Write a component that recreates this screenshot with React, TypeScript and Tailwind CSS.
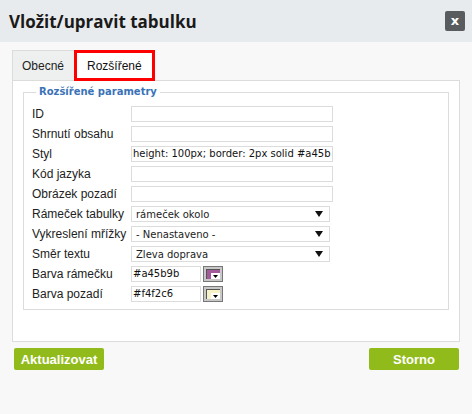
import type { ReactNode } from 'react';

function Caret() {
  return (
    <svg width="8" height="6" viewBox="0 0 8 6" className="shrink-0">
      <path d="M0 0 H8 L4 6 Z" fill="#111" />
    </svg>
  );
}

function TextField({ value = '' }: { value?: string }) {
  return (
    <div className="h-[16px] w-[202px] border border-[#dcdcdc] bg-white px-[1px] overflow-hidden whitespace-nowrap text-[10px] leading-[14px] text-[#111] font-['DejaVu_Sans',sans-serif]">
      {value}
    </div>
  );
}

function SelectField({ value }: { value: string }) {
  return (
    <div className="h-[16px] w-[199px] border border-[#dcdcdc] bg-white flex items-center justify-between pl-[4px] pr-[6px] text-[10px] text-[#222] font-['DejaVu_Sans',sans-serif]">
      <span>{value}</span>
      <Caret />
    </div>
  );
}

function ColorField({ value, color }: { value: string; color: string }) {
  return (
    <div className="flex items-center gap-[2px]">
      <div className="h-[16px] w-[70px] border border-[#dcdcdc] bg-white px-[1px] text-[10px] leading-[14px] text-[#111] font-['DejaVu_Sans',sans-serif]">
        {value}
      </div>
      <div className="h-[16px] w-[20px] border border-[#777] bg-[#c8c8c8] p-[2px] flex">
        <div
          className="flex-1 border-t border-l border-[#555] flex items-end justify-end"
          style={{ backgroundColor: color }}
        >
          <div className="w-[9px] h-[6px] bg-white flex items-center justify-center">
            <svg width="5" height="3" viewBox="0 0 5 3">
              <path d="M0 0 H5 L2.5 3 Z" fill="#000" />
            </svg>
          </div>
        </div>
      </div>
    </div>
  );
}

function Row({ label, children }: { label: string; children: ReactNode }) {
  return (
    <div className="flex items-center h-[20px]">
      <div className="w-[99px] text-[12px] text-[#222] whitespace-nowrap">{label}</div>
      {children}
    </div>
  );
}

export default function App() {
  return (
    <div className="w-[472px] h-[414px] bg-[#f8f8f8] font-['Liberation_Sans',Arial,sans-serif] overflow-hidden">
      {/* Header */}
      <div className="h-[42px] bg-[#e8ebee] flex items-center justify-between pl-[9px] pr-[7px]">
        <h1 className="text-[17px] font-bold text-[#1a1a1a] font-['Open_Sans',sans-serif] leading-none pt-[1px]">
          Vložit/upravit tabulku
        </h1>
        <button className="w-[20px] h-[20px] bg-[#595c5f] rounded-[2px] flex items-center justify-center text-white text-[13px] font-bold leading-none font-['DejaVu_Sans',sans-serif] pb-[2px]">
          x
        </button>
      </div>

      <div className="px-[12px] pt-[8px]">
        {/* Tabs */}
        <div className="flex items-end h-[30px]">
          <div className="h-[30px] w-[62px] bg-[#eef0f0] border-t border-l border-[#dcdcdc] flex items-center pl-[9px] text-[12px] text-[#222]">
            Obecné
          </div>
          <div className="h-[31px] w-[81px] bg-white border-[3px] border-[#ff0000] flex items-center pl-[10px] text-[12px] text-[#111] -mb-[1px] relative z-10">
            Rozšířené
          </div>
        </div>

        {/* Panel */}
        <div className="h-[262px] border border-[#dcdcdc] bg-white pt-[4px] px-[10px]">
          <fieldset className="border border-[#dcdcdc] pl-[8px] pr-[8px] pt-[5px] pb-[5px] m-0">
            <legend className="ml-[4px] px-[3px] text-[10px] leading-[14px] font-bold text-[#3a72b8] font-['DejaVu_Sans',sans-serif]">
              Rozšířené parametry
            </legend>
            <Row label="ID">
              <TextField />
            </Row>
            <Row label="Shrnutí obsahu">
              <TextField />
            </Row>
            <Row label="Styl">
              <TextField value="height: 100px; border: 2px solid #a45b" />
            </Row>
            <Row label="Kód jazyka">
              <TextField />
            </Row>
            <Row label="Obrázek pozadí">
              <TextField />
            </Row>
            <Row label="Rámeček tabulky">
              <SelectField value="rámeček okolo" />
            </Row>
            <Row label="Vykreslení mřížky">
              <SelectField value="- Nenastaveno -" />
            </Row>
            <Row label="Směr textu">
              <SelectField value="Zleva doprava" />
            </Row>
            <Row label="Barva rámečku">
              <ColorField value="#a45b9b" color="#a45b9b" />
            </Row>
            <Row label="Barva pozadí">
              <ColorField value="#f4f2c6" color="#f4f2c6" />
            </Row>
          </fieldset>
        </div>

        {/* Buttons */}
        <div className="flex justify-between pt-[6px] px-[2px] pr-[1px]">
          <button className="h-[22px] w-[90px] bg-[#91bb1a] rounded-[2px] text-white text-[13px] font-bold leading-none">
            Aktualizovat
          </button>
          <button className="h-[22px] w-[90px] bg-[#91bb1a] rounded-[2px] text-white text-[13px] font-bold leading-none">
            Storno
          </button>
        </div>
      </div>
    </div>
  );
}
